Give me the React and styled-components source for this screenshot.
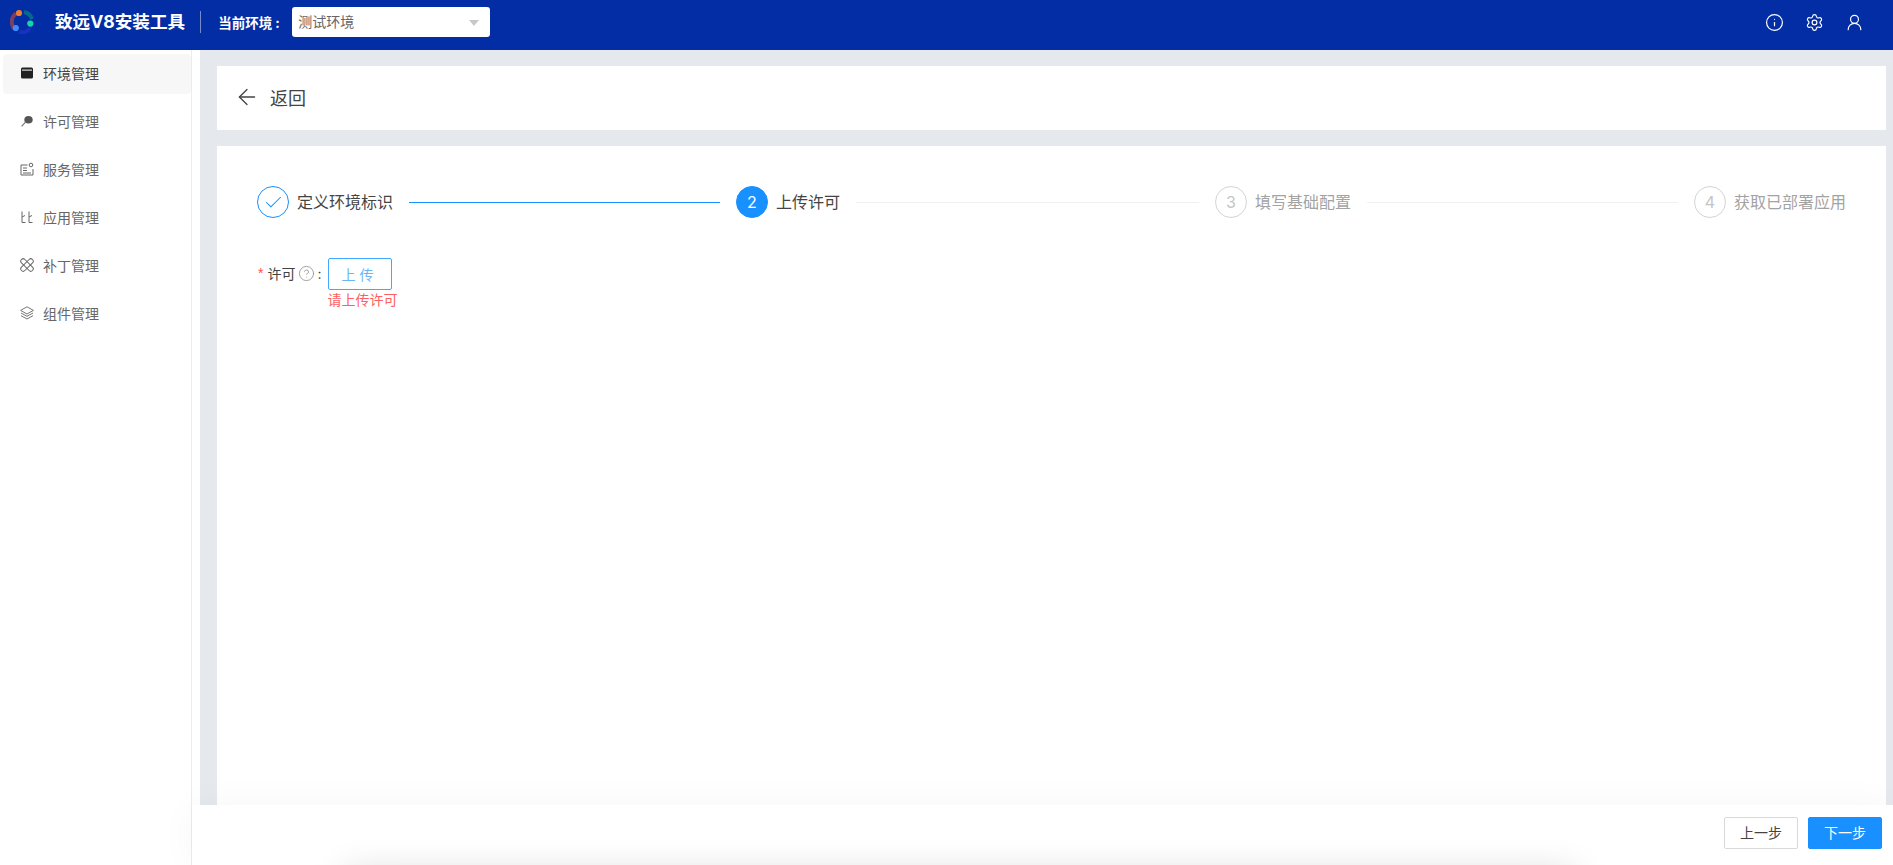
import React from 'react';
import styled, { createGlobalStyle } from 'styled-components';
import { Info, Settings, UserRound, ArrowLeft, Check, CircleHelp } from 'lucide-react';

const GlobalStyle = createGlobalStyle`
  html, body {
    margin: 0;
    padding: 0;
    height: 100%;
    overflow: hidden;
    font-family: Inter, "Noto Sans CJK SC", "Noto Sans", sans-serif;
    color: #333;
  }
  * { box-sizing: border-box; }
`;

const Page = styled.div`
  display: flex;
  flex-direction: column;
  height: 865px;
  background: #fff;
  position: relative;
  overflow: hidden;
`;

// ============================================================
// Header
// ============================================================
const Header = styled.header`
  flex: none;
  display: flex;
  align-items: center;
  height: 50px;
  padding: 0 29px 6px 10px;
  background: #032da5;
  color: #fff;
`;

const Logo = styled.svg`
  width: 24px;
  height: 24px;
  flex: none;
`;

const Title = styled.div`
  margin-left: 21px;
  font-size: 17.6px;
  font-weight: 700;
  line-height: 24px;
  white-space: nowrap;
`;

const HeaderDivider = styled.div`
  width: 1px;
  height: 22px;
  margin: 0 17px 0 15px;
  background: rgba(255, 255, 255, 0.45);
`;

const EnvLabel = styled.div`
  font-size: 13.5px;
  font-weight: 700;
  white-space: nowrap;
  width: 74px;
`;

const EnvSelect = styled.div`
  position: relative;
  display: flex;
  align-items: center;
  width: 198px;
  height: 30px;
  padding: 0 0 2px 6px;
  border-radius: 3px;
  background: #fff;
  color: #666;
  font-size: 14px;

  &::after {
    content: '';
    position: absolute;
    right: 11px;
    top: 13px;
    border-left: 5px solid transparent;
    border-right: 5px solid transparent;
    border-top: 6px solid #c8c8c8;
  }
`;

const HeaderIcons = styled.div`
  margin-left: auto;
  display: flex;
  align-items: center;
  gap: 21px;
`;

// ============================================================
// Body
// ============================================================
const Body = styled.div`
  flex: 1;
  display: flex;
  min-height: 0;
`;

const Sidebar = styled.nav`
  flex: none;
  width: 192px;
  padding: 4px 0 0 3px;
  border-right: 1px solid #ececec;
  display: flex;
  flex-direction: column;
  gap: 8px;
`;

const MenuItem = styled.div`
  display: flex;
  align-items: center;
  height: 40px;
  padding: 0 0 2px 17px;
  border-radius: 4px;
  font-size: 14px;
  color: ${p => (p.$active ? '#444' : '#666')};
  background: ${p => (p.$active ? '#f7f7f7' : 'transparent')};
`;

const MenuIcon = styled.svg`
  width: 14px;
  height: 14px;
  flex: none;
  margin-right: 9px;
  color: #666;
`;

const Main = styled.main`
  flex: 1;
  position: relative;
  display: flex;
  flex-direction: column;
  min-width: 0;
  margin-left: 8px;
  padding: 16px 7px 0 17px;
  gap: 16px;
  background: #e5e8ed;
`;

const BackCard = styled.div`
  flex: none;
  display: flex;
  align-items: center;
  height: 64px;
  padding: 0 0 2px 17px;
  gap: 10px;
  background: #fff;
  font-size: 18px;
  color: #444;
`;

const StepCard = styled.div`
  flex: 1;
  padding: 40px;
  background: #fff;
`;

// ============================================================
// Steps
// ============================================================
const Steps = styled.div`
  display: flex;
  margin-bottom: 40px;
`;

const Step = styled.div`
  display: flex;
  align-items: center;
  flex: ${p => (p.$last ? 'none' : '1 1 0')};
`;

const StepCircle = styled.div`
  flex: none;
  display: flex;
  align-items: center;
  justify-content: center;
  width: 32px;
  height: 32px;
  margin-right: 8px;
  border-radius: 50%;
  font-size: 16px;
  border: 1px solid ${p => (p.$state === 'wait' ? '#d4d4d4' : '#1890ff')};
  background: ${p => (p.$state === 'active' ? '#1890ff' : '#fff')};
  color: ${p => (p.$state === 'active' ? '#fff' : p.$state === 'wait' ? '#c4c4c4' : '#1890ff')};
`;

const StepTitle = styled.div`
  flex: none;
  font-size: 16px;
  line-height: 32px;
  color: ${p => (p.$state === 'wait' ? '#a3a3a3' : '#444')};
`;

const StepLine = styled.div`
  flex: 1;
  height: 1px;
  margin: 1px 16px 0;
  background: ${p => (p.$done ? '#1890ff' : '#f0f0f0')};
`;

// ============================================================
// Form
// ============================================================
const FormRow = styled.div`
  display: flex;
  align-items: flex-start;
`;

const FormLabel = styled.div`
  display: flex;
  align-items: center;
  height: 32px;
  margin-right: 6px;
  padding: 0 0 2px 1px;
  font-size: 14px;
  color: #444;
`;

const Required = styled.span`
  color: #ff4d4f;
  margin-right: 4px;
  font-family: "Liberation Sans", sans-serif;
`;

const HelpIcon = styled(CircleHelp)`
  margin: 0 2px 0 3px;
  color: #888;
`;

const UploadButton = styled.button`
  display: block;
  width: 64px;
  height: 32px;
  padding: 0;
  border: 1px solid #40a9ff;
  border-radius: 2px;
  background: #fff;
  color: #69b6f5;
  font: inherit;
  font-size: 14px;
  letter-spacing: 4px;
`;

const ErrorText = styled.div`
  font-size: 14px;
  line-height: 20px;
  white-space: nowrap;
  color: #ff5f61;
`;

// ============================================================
// Footer
// ============================================================
const Footer = styled.footer`
  position: absolute;
  left: -8px;
  right: 0;
  bottom: 0;
  z-index: 2;
  display: flex;
  justify-content: flex-end;
  align-items: center;
  gap: 10px;
  height: 60px;
  padding: 0 11px 4px 0;
  background: #fff;
  box-shadow: 0 0 36px rgba(0, 0, 0, 0.04);
`;

const FooterButton = styled.button`
  width: 74px;
  height: 32px;
  padding: 0 0 2px;
  border-radius: 2px;
  border: 1px solid ${p => (p.$primary ? '#1890ff' : '#d9d9d9')};
  background: ${p => (p.$primary ? '#1890ff' : '#fff')};
  color: ${p => (p.$primary ? '#fff' : '#444')};
  font: inherit;
  font-size: 14px;
`;

// shadow of something lying just under the bottom edge of the window
const BottomShadow = styled.div`
  position: absolute;
  left: 345px;
  right: 318px;
  top: 878px;
  height: 40px;
  z-index: 3;
  box-shadow: 0 0 40px rgba(0, 0, 0, 0.2);
`;

const WindowIcon = () => (
  <MenuIcon viewBox="0 0 14 14">
    <rect x="1" y="1.5" width="12" height="11" rx="1.5" fill="#222" />
    <rect x="2" y="3.6" width="10" height="1" fill="#fff" />
  </MenuIcon>
);

const KeyIcon = () => (
  <MenuIcon viewBox="0 0 14 14">
    <ellipse cx="8.5" cy="5.8" rx="4.2" ry="3.8" fill="#555" />
    <path d="M5.5 8.2 L1.6 12.4" stroke="#777" strokeWidth="1.2" fill="none" />
  </MenuIcon>
);

const ServiceIcon = () => (
  <MenuIcon viewBox="0 0 14 14" fill="none" stroke="currentColor" strokeWidth="1">
    <path d="M7.5 3H1v10h12V7" />
    <path d="M3 6H7M3 8.5H7M3 11H11" />
    <circle cx="11" cy="3" r="1.8" />
  </MenuIcon>
);

const AppIcon = () => (
  <MenuIcon viewBox="0 0 14 14" fill="none" stroke="currentColor" strokeWidth="1">
    <path d="M2 1.5v11h3.5M9 1.5v11h3.5" />
    <path d="M2 7l3-1.5M9 7l3-1.5" />
  </MenuIcon>
);

const PatchIcon = () => (
  <MenuIcon viewBox="0 0 14 14" fill="none" stroke="currentColor" strokeWidth="1">
    <rect x="-0.8" y="4.6" width="15.6" height="4.8" rx="2.4" transform="rotate(45 7 7)" />
    <rect x="-0.8" y="4.6" width="15.6" height="4.8" rx="2.4" transform="rotate(-45 7 7)" />
  </MenuIcon>
);

const LayersIcon = () => (
  <MenuIcon viewBox="0 0 14 14" fill="none" stroke="currentColor" strokeWidth="0.9">
    <path d="M7 0.8 13.4 4.4 7 8 0.6 4.4Z" />
    <path d="M1 7 7 10.3 13 7" />
    <path d="M1 9.7 7 13 13 9.7" />
  </MenuIcon>
);

const menuItems = [
  { label: '环境管理', Icon: WindowIcon, active: true },
  { label: '许可管理', Icon: KeyIcon },
  { label: '服务管理', Icon: ServiceIcon },
  { label: '应用管理', Icon: AppIcon },
  { label: '补丁管理', Icon: PatchIcon },
  { label: '组件管理', Icon: LayersIcon },
];

const steps = [
  { title: '定义环境标识', state: 'done' },
  { title: '上传许可', state: 'active', num: 2 },
  { title: '填写基础配置', state: 'wait', num: 3 },
  { title: '获取已部署应用', state: 'wait', num: 4 },
];

export default function App() {
  return (
    <Page>
      <GlobalStyle />
      <Header>
        <Logo viewBox="0 0 24 24" fill="none">
          <path d="M4.5 19 A10.5 10.5 0 0 1 6 3.5" stroke="#7d3f5e" strokeWidth="4" />
          <path d="M14 2 A10.5 10.5 0 0 1 22 9" stroke="#06688f" strokeWidth="4" />
          <path d="M20 18.5 A10.5 10.5 0 0 1 9 22" stroke="#1a2fc4" strokeWidth="4" />
          <circle cx="9" cy="3" r="3.1" fill="#ee7d2e" />
          <circle cx="20.3" cy="13.6" r="3.1" fill="#10d6a8" />
          <circle cx="5.8" cy="18" r="3.1" fill="#3f8cff" />
        </Logo>
        <Title>致远V8安装工具</Title>
        <HeaderDivider />
        <EnvLabel>当前环境 :</EnvLabel>
        <EnvSelect>测试环境</EnvSelect>
        <HeaderIcons>
          <Info size={19} strokeWidth={1.5} />
          <Settings size={19} strokeWidth={1.5} />
          <UserRound size={19} strokeWidth={1.5} />
        </HeaderIcons>
      </Header>
      <Body>
        <Sidebar>
          {menuItems.map(({ label, Icon, active }) => (
            <MenuItem key={label} $active={active}>
              <Icon />
              {label}
            </MenuItem>
          ))}
        </Sidebar>
        <Main>
          <BackCard>
            <ArrowLeft size={26} strokeWidth={1.2} />
            返回
          </BackCard>
          <StepCard>
            <Steps>
              {steps.map((s, i) => (
                <Step key={s.title} $last={i === steps.length - 1}>
                  <StepCircle $state={s.state}>
                    {s.state === 'done' ? <Check size={21} strokeWidth={1.2} /> : s.num}
                  </StepCircle>
                  <StepTitle $state={s.state}>{s.title}</StepTitle>
                  {i < steps.length - 1 && <StepLine $done={s.state === 'done'} />}
                </Step>
              ))}
            </Steps>
            <FormRow>
              <FormLabel>
                <Required>*</Required>
                许可
                <HelpIcon size={17} strokeWidth={1.1} />
                :
              </FormLabel>
              <div>
                <UploadButton>上传</UploadButton>
                <ErrorText>请上传许可</ErrorText>
              </div>
            </FormRow>
          </StepCard>
          <Footer>
            <FooterButton>上一步</FooterButton>
            <FooterButton $primary>下一步</FooterButton>
          </Footer>
        </Main>
      </Body>
      <BottomShadow />
    </Page>
  );
}
